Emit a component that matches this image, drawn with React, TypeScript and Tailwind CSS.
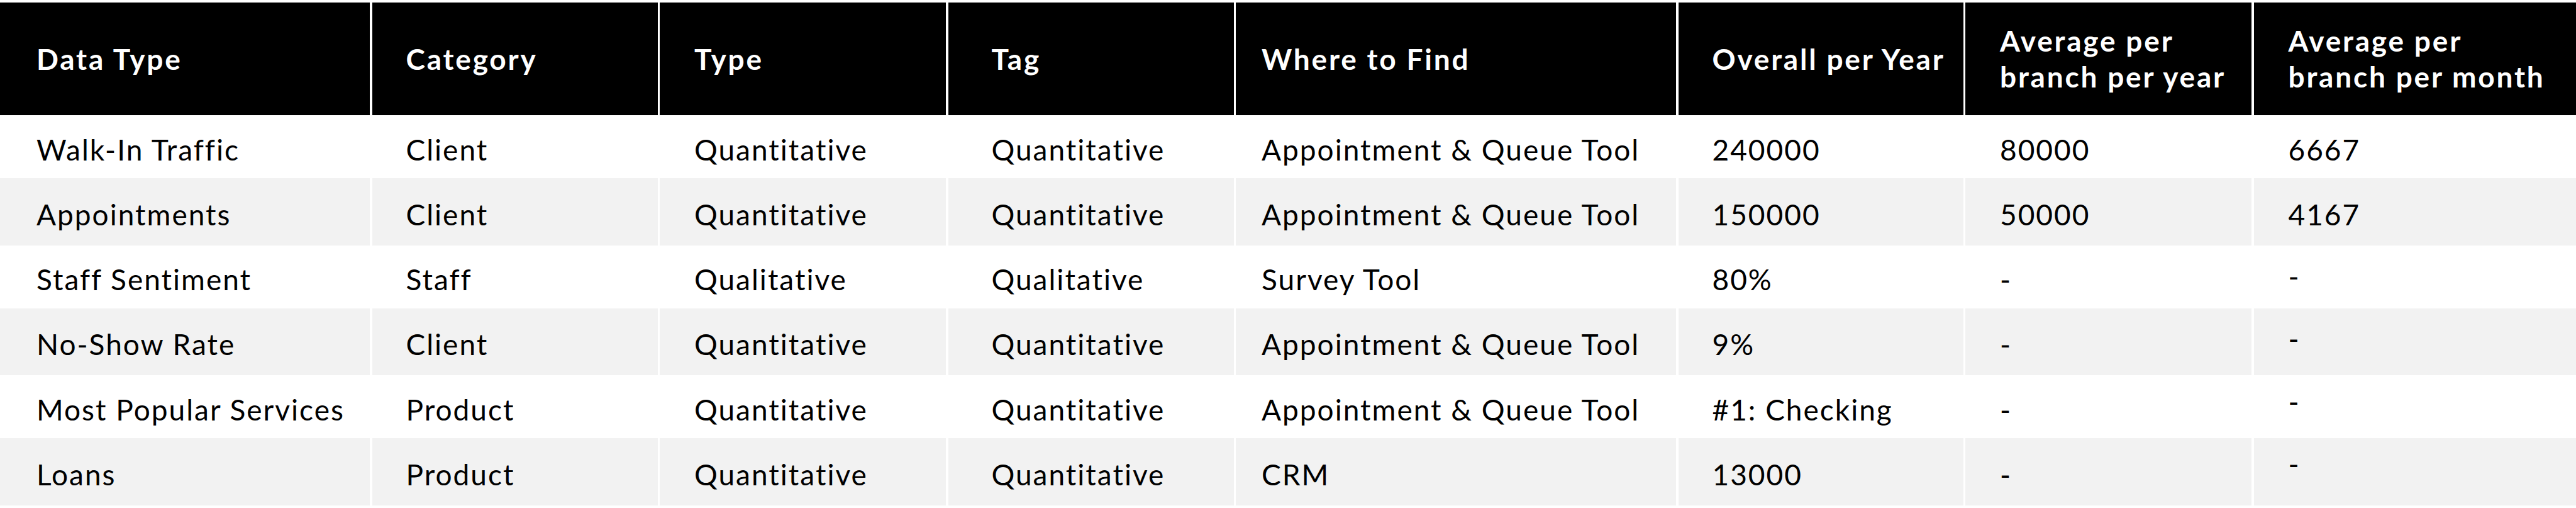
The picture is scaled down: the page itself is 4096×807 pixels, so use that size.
const headers: React.ReactNode[] = [
  "Data Type",
  "Category",
  "Type",
  "Tag",
  "Where to Find",
  "Overall per Year",
  <>Average per<br />branch per year</>,
  <>Average per<br />branch per month</>,
];

const rows: string[][] = [
  ["Walk-In Traffic", "Client", "Quantitative", "Quantitative", "Appointment & Queue Tool", "240000", "80000", "6667"],
  ["Appointments", "Client", "Quantitative", "Quantitative", "Appointment & Queue Tool", "150000", "50000", "4167"],
  ["Staff Sentiment", "Staff", "Qualitative", "Qualitative", "Survey Tool", "80%", "-", "-"],
  ["No-Show Rate", "Client", "Quantitative", "Quantitative", "Appointment & Queue Tool", "9%", "-", "-"],
  ["Most Popular Services", "Product", "Quantitative", "Quantitative", "Appointment & Queue Tool", "#1: Checking", "-", "-"],
  ["Loans", "Product", "Quantitative", "Quantitative", "CRM", "13000", "-", "-"],
];

// left padding per column, taken from the reference
const pads = ["pl-[58px]", "pl-[54px]", "pl-[55px]", "pl-[69px]", "pl-[41px]", "pl-[54px]", "pl-[55px]", "pl-[55px]"];

// the dashes in the last column sit a bit higher in the reference
const lastColV = ["pt-[8px]", "pt-[8px]", "pb-[2px]", "pb-[10px]", "pb-[18px]", "pb-[26px]"];

const App = () => {
  return (
    <div className="w-[4096px] h-[807px] bg-white pt-[3.5px] overflow-hidden font-['Lato',sans-serif] text-[46px]">
      <div className="grid grid-cols-[588px_454px_455px_454px_700px_453px_455px_1fr] gap-x-[3.5px]">
        {/* Header */}
        {headers.map((h, i) => (
          <div
            key={i}
            className={`h-[179.5px] bg-black text-white font-bold tracking-[2.8px] leading-[57px] flex items-center ${pads[i]}`}
          >
            <span>{h}</span>
          </div>
        ))}

        {/* Body */}
        {rows.map((row, r) =>
          row.map((cell, c) => (
            <div
              key={`${r}-${c}`}
              className={`flex items-center text-black tracking-[2px] leading-normal ${pads[c]} ${
                c === 7 ? lastColV[r] : "pt-[8px]"
              } ${r % 2 === 1 ? "bg-[#f2f2f2] h-[106.5px]" : "bg-white h-[100px]"}`}
            >
              {cell}
            </div>
          ))
        )}
      </div>
    </div>
  );
};

export default App;
